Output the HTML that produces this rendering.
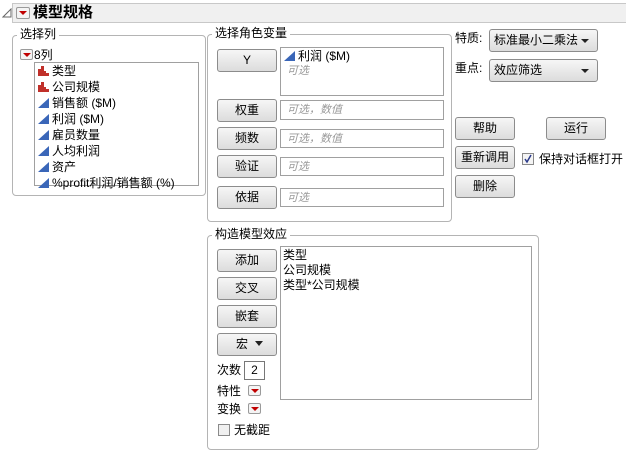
<!DOCTYPE html>
<html><head><meta charset="utf-8"><style>
*{margin:0;padding:0;box-sizing:border-box}
body{width:626px;height:453px;background:#fff;position:relative;overflow:hidden;font-family:"Liberation Sans","Noto Sans CJK SC",sans-serif;font-size:12px;color:#000}
.a{position:absolute;white-space:nowrap}
.grp{position:absolute;border:1px solid #b4b4b4;border-radius:4px}
.lbl{position:absolute;background:#fff;padding:0 3px;line-height:14px;font-size:12px}
.btn{position:absolute;border:1px solid #8c8c8c;border-radius:3px;background:linear-gradient(#f6f6f6,#dcdcdc);text-align:center;font-size:12px;line-height:20px}
.box{position:absolute;border:1px solid #a0a0a0;background:#fff}
.ph{color:#9a9a9a;font-style:italic;font-size:11px;padding-left:6px;line-height:18px}
.rb{position:absolute;width:13px;height:11px;border:1px solid #9a9a9a;border-radius:2px;background:#f4f4f4}
.rb:after{content:"";position:absolute;left:2px;top:3px;border-left:4px solid transparent;border-right:4px solid transparent;border-top:4px solid #c00000}
.it{position:absolute;left:3px;line-height:16px;white-space:nowrap}
.ic{display:inline-block;width:11px;height:10px;margin-right:3px;vertical-align:-1px}
.dd{position:absolute;border:1px solid #8c8c8c;border-radius:3px;background:linear-gradient(#f6f6f6,#dcdcdc);padding-left:4px;line-height:20px}
.dd:after{content:"";position:absolute;right:8px;top:9px;border-left:4px solid transparent;border-right:4px solid transparent;border-top:4px solid #222}
</style></head><body>
<svg class="a" style="left:2px;top:8px" width="10" height="10"><path d="M1 9 L9 9 L9 1 Z" fill="none" stroke="#666"/></svg>
<div class="a" style="left:12px;top:3px;width:614px;height:20px;background:#f0f0f0;border:1px solid #c8c8c8;border-right:none"></div>
<div class="rb" style="left:16px;top:7px;width:14px;height:12px"></div>
<div class="a" style="left:33px;top:3px;font-size:15px;font-weight:bold;line-height:20px">模型规格</div>

<div class="grp" style="left:12px;top:35px;width:194px;height:161px"></div>
<div class="lbl" style="left:17px;top:27px">选择列</div>
<div class="rb" style="left:20px;top:49px"></div>
<div class="a" style="left:34px;top:47px;line-height:16px">8列</div>
<div class="box" style="left:34px;top:62px;width:165px;height:124px">
<div class="it" style="top:0">
<svg class="ic" viewBox="0 0 11 10"><path d="M0 10V3h3V0h3v5h2v2h3v3z" fill="#c0302a"/></svg>类型</div>
<div class="it" style="top:16px"><svg class="ic" viewBox="0 0 11 10"><path d="M0 10V3h3V0h3v5h2v2h3v3z" fill="#c0302a"/></svg>公司规模</div>
<div class="it" style="top:32px"><svg class="ic" viewBox="0 0 11 10"><path d="M0 10L11 0V10z" fill="#3a66b8"/></svg>销售额 ($M)</div>
<div class="it" style="top:48px"><svg class="ic" viewBox="0 0 11 10"><path d="M0 10L11 0V10z" fill="#3a66b8"/></svg>利润 ($M)</div>
<div class="it" style="top:64px"><svg class="ic" viewBox="0 0 11 10"><path d="M0 10L11 0V10z" fill="#3a66b8"/></svg>雇员数量</div>
<div class="it" style="top:80px"><svg class="ic" viewBox="0 0 11 10"><path d="M0 10L11 0V10z" fill="#3a66b8"/></svg>人均利润</div>
<div class="it" style="top:96px"><svg class="ic" viewBox="0 0 11 10"><path d="M0 10L11 0V10z" fill="#3a66b8"/></svg>资产</div>
<div class="it" style="top:112px"><svg class="ic" viewBox="0 0 11 10"><path d="M0 10L11 0V10z" fill="#3a66b8"/></svg>%profit利润/销售额 (%)</div>
</div>

<div class="grp" style="left:207px;top:34px;width:245px;height:188px"></div>
<div class="lbl" style="left:212px;top:26px">选择角色变量</div>
<div class="btn" style="left:217px;top:49px;width:60px;height:23px">Y</div>
<div class="box" style="left:280px;top:47px;width:164px;height:49px">
<div class="it" style="top:0;left:3px"><svg class="ic" viewBox="0 0 11 10"><path d="M0 10L11 0V10z" fill="#3a66b8"/></svg>利润 ($M)</div>
<div class="ph" style="position:absolute;top:14px;left:0">可选</div></div>
<div class="btn" style="left:217px;top:99px;width:60px;height:23px">权重</div>
<div class="box" style="left:280px;top:100px;width:164px;height:20px"><div class="ph">可选，数值</div></div>
<div class="btn" style="left:217px;top:127px;width:60px;height:23px">频数</div>
<div class="box" style="left:280px;top:129px;width:164px;height:19px"><div class="ph">可选，数值</div></div>
<div class="btn" style="left:217px;top:155px;width:60px;height:23px">验证</div>
<div class="box" style="left:280px;top:157px;width:164px;height:19px"><div class="ph">可选</div></div>
<div class="btn" style="left:217px;top:186px;width:60px;height:23px">依据</div>
<div class="box" style="left:280px;top:188px;width:164px;height:19px"><div class="ph">可选</div></div>

<div class="a" style="left:455px;top:30px;line-height:16px">特质:</div>
<div class="dd" style="left:489px;top:29px;width:109px;height:23px">标准最小二乘法</div>
<div class="a" style="left:455px;top:60px;line-height:16px">重点:</div>
<div class="dd" style="left:489px;top:59px;width:109px;height:23px">效应筛选</div>
<div class="btn" style="left:455px;top:117px;width:60px;height:23px">帮助</div>
<div class="btn" style="left:546px;top:117px;width:60px;height:23px">运行</div>
<div class="btn" style="left:455px;top:146px;width:60px;height:23px">重新调用</div>
<div class="a" style="left:522px;top:153px;width:12px;height:12px;border:1px solid #8a8a8a;background:#f4f4f4"><svg width="10" height="10" style="position:absolute;left:0;top:0"><path d="M2 5L4 8L8 1" fill="none" stroke="#2a3a8a" stroke-width="1.5"/></svg></div>
<div class="a" style="left:539px;top:151px;line-height:16px">保持对话框打开</div>
<div class="btn" style="left:455px;top:175px;width:60px;height:23px">删除</div>

<div class="grp" style="left:207px;top:235px;width:332px;height:215px"></div>
<div class="lbl" style="left:212px;top:227px">构造模型效应</div>
<div class="btn" style="left:217px;top:249px;width:60px;height:23px">添加</div>
<div class="btn" style="left:217px;top:277px;width:60px;height:23px">交叉</div>
<div class="btn" style="left:217px;top:305px;width:60px;height:23px">嵌套</div>
<div class="btn" style="left:217px;top:333px;width:60px;height:23px;text-align:left;padding-left:18px">宏 <span style="display:inline-block;border-left:4px solid transparent;border-right:4px solid transparent;border-top:5px solid #222;vertical-align:2px;margin-left:4px"></span></div>
<div class="box" style="left:280px;top:246px;width:252px;height:154px">
<div class="it" style="top:0;left:2px">类型</div>
<div class="it" style="top:15px;left:2px">公司规模</div>
<div class="it" style="top:30px;left:2px">类型*公司规模</div></div>
<div class="a" style="left:217px;top:362px;line-height:16px">次数</div>
<div class="box" style="left:244px;top:361px;width:21px;height:19px;border-color:#777;text-align:center;line-height:17px">2</div>
<div class="a" style="left:217px;top:383px;line-height:16px">特性</div>
<div class="rb" style="left:248px;top:385px"></div>
<div class="a" style="left:217px;top:401px;line-height:16px">变换</div>
<div class="rb" style="left:248px;top:403px"></div>
<div class="a" style="left:218px;top:424px;width:12px;height:12px;border:1px solid #8a8a8a;background:#f0f0f0"></div>
<div class="a" style="left:234px;top:422px;line-height:16px">无截距</div>
</body></html>
